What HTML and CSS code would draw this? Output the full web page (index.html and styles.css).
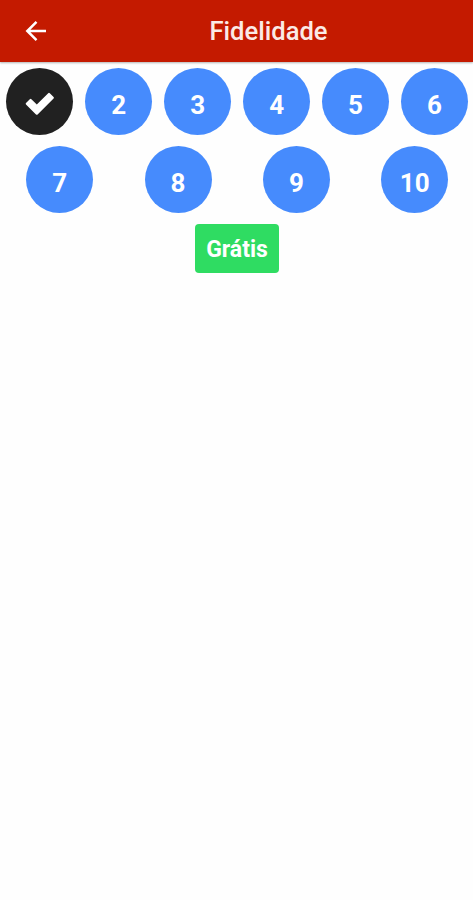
FILE: index.html
```html
<!DOCTYPE html>
<html lang="pt-BR">
<head>
    <meta charset="UTF-8">
    <meta name="viewport" content="width=device-width, initial-scale=1.0">
    <title>Fidelidade</title>
    <link rel="stylesheet" href="styles.css">
</head>
<body>
    <header class="toolbar">
        <a class="back" href="#" aria-label="Voltar">
            <svg width="22" height="22" viewBox="0 0 22 22">
                <path d="M21 11H3M11.5 1.8L2.3 11L11.5 20.2" />
            </svg>
        </a>
        <h1>Fidelidade</h1>
    </header>
    <main class="card-stamps">
        <div class="row">
            <div class="stamp checked">
                <svg width="30" height="24" viewBox="0 0 30 24">
                    <path d="M1 11L4.8 7.2Q5.6 6.5 6.4 7.2L11.8 12.4L23.2 1.2Q24 0.5 24.8 1.2L28.6 5Q29.3 5.8 28.6 6.6L12.6 22.4Q11.8 23.1 11 22.4L1 12.6Q0.3 11.8 1 11Z" />
                </svg>
            </div>
            <div class="stamp"><span>2</span></div>
            <div class="stamp"><span>3</span></div>
            <div class="stamp"><span>4</span></div>
            <div class="stamp"><span>5</span></div>
            <div class="stamp"><span>6</span></div>
        </div>
        <div class="row">
            <div class="stamp"><span>7</span></div>
            <div class="stamp"><span>8</span></div>
            <div class="stamp"><span>9</span></div>
            <div class="stamp"><span>10</span></div>
        </div>
        <button class="free" type="button">Grátis</button>
    </main>
</body>
</html>
```
FILE: styles.css
```css
body {
    font-family: Roboto, sans-serif;
    margin: 0;
    background-color: #fefefe;
    overflow-x: hidden;
}

.toolbar {
    display: flex;
    align-items: center;
    height: 62px;
    background-color: #c41a00;
    box-shadow: 0 1px 2px rgba(0, 0, 0, 0.3);
}

.back {
    display: flex;
    width: 22px;
    margin-left: 25px;
}

.back svg {
    fill: none;
    stroke: #fff;
    stroke-width: 2.5;
}

h1 {
    flex: 1;
    margin: 0 0 0 17px;
    padding-bottom: 1px;
    font-size: 25.6px;
    line-height: 30px;
    font-weight: 500;
    text-align: center;
    color: #fbeae6;
}

.card-stamps {
    display: flex;
    flex-direction: column;
    align-items: center;
    padding-top: 6px;
}

.row {
    display: flex;
    justify-content: space-around;
    width: 473.4px;
    margin-bottom: 11px;
    margin-right: -1.4px;
}

.stamp {
    display: flex;
    justify-content: center;
    align-items: center;
    width: 67px;
    height: 67px;
    border-radius: 50%;
    background-color: #468bfd;
    color: #fff;
    font-size: 26px;
    font-weight: 700;
}

/* the digits sit a little below the middle of the circle */
.stamp span {
    padding-top: 7px;
}

.checked {
    background-color: #212121;
}

.checked svg {
    fill: #fff;
    padding-top: 4px;
}

.free {
    width: 84px;
    height: 49px;
    padding: 2px 0 0 1px;
    border: none;
    border-radius: 4px;
    background-color: #2fdc62;
    color: #fff;
    font-family: inherit;
    font-size: 23px;
    font-weight: 700;
}
```
